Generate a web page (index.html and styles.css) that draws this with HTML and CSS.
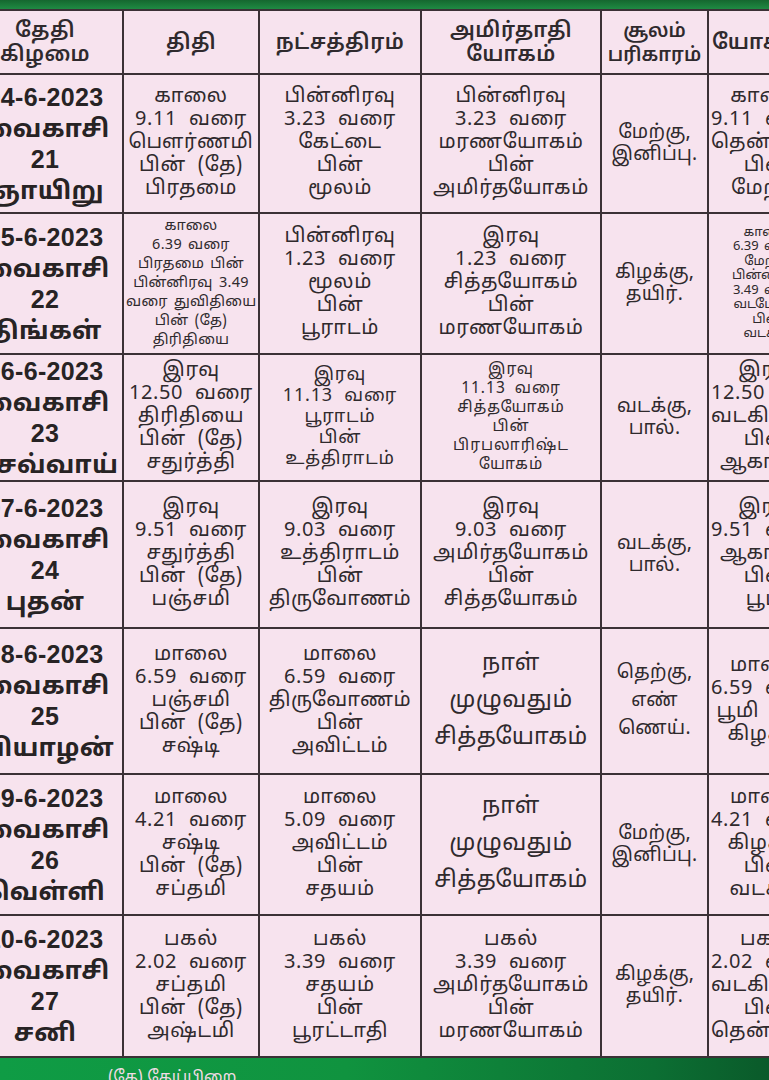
FILE: index.html
```html
<!DOCTYPE html>
<html lang="ta">
<head>
<meta charset="utf-8">
<title>பஞ்சாங்கம்</title>
<link rel="stylesheet" href="styles.css">
</head>
<body>
<div class="page">
  <div class="topbar"></div>
  <table class="cal">
    <colgroup>
      <col class="c1"><col class="c2"><col class="c3"><col class="c4"><col class="c5"><col class="c6">
    </colgroup>
    <thead>
      <tr class="head">
        <th>தேதி<br>கிழமை</th>
        <th>திதி</th>
        <th>நட்சத்திரம்</th>
        <th>அமிர்தாதி<br>யோகம்</th>
        <th class="hs">சூலம்<br>பரிகாரம்</th>
        <th>யோகினி</th>
      </tr>
    </thead>
    <tbody>
      <tr class="r1">
        <td class="date">04-6-2023<br>வைகாசி<br>21<br>ஞாயிறு</td>
        <td>காலை<br>9.11 வரை<br>பௌர்ணமி<br>பின் (தே)<br>பிரதமை</td>
        <td>பின்னிரவு<br>3.23 வரை<br>கேட்டை<br>பின்<br>மூலம்</td>
        <td>பின்னிரவு<br>3.23 வரை<br>மரணயோகம்<br>பின்<br>அமிர்தயோகம்</td>
        <td class="sul">மேற்கு,<br>இனிப்பு.</td>
        <td>காலை<br>9.11 வரை<br>தென்மேற்கு<br>பின்<br>மேற்கு</td>
      </tr>
      <tr class="r2">
        <td class="date">05-6-2023<br>வைகாசி<br>22<br>திங்கள்</td>
        <td class="small">காலை<br>6.39 வரை<br>பிரதமை பின்<br>பின்னிரவு 3.49<br>வரை துவிதியை<br>பின் (தே)<br>திரிதியை</td>
        <td>பின்னிரவு<br>1.23 வரை<br>மூலம்<br>பின்<br>பூராடம்</td>
        <td>இரவு<br>1.23 வரை<br>சித்தயோகம்<br>பின்<br>மரணயோகம்</td>
        <td class="sul">கிழக்கு,<br>தயிர்.</td>
        <td class="tiny">காலை<br>6.39 வரை<br>மேற்கு<br>பின்னிரவு<br>3.49 வரை<br>வடமேற்கு<br>பின்<br>வடக்கு</td>
      </tr>
      <tr class="r3">
        <td class="date">06-6-2023<br>வைகாசி<br>23<br>செவ்வாய்</td>
        <td>இரவு<br>12.50 வரை<br>திரிதியை<br>பின் (தே)<br>சதுர்த்தி</td>
        <td class="mid">இரவு<br>11.13 வரை<br>பூராடம்<br>பின்<br>உத்திராடம்</td>
        <td class="six">இரவு<br>11.13 வரை<br>சித்தயோகம்<br>பின்<br>பிரபலாரிஷ்ட<br>யோகம்</td>
        <td class="sul">வடக்கு,<br>பால்.</td>
        <td>இரவு<br>12.50 வரை<br>வடகிழக்கு<br>பின்<br>ஆகாயம்</td>
      </tr>
      <tr class="r4">
        <td class="date">07-6-2023<br>வைகாசி<br>24<br>புதன்</td>
        <td>இரவு<br>9.51 வரை<br>சதுர்த்தி<br>பின் (தே)<br>பஞ்சமி</td>
        <td>இரவு<br>9.03 வரை<br>உத்திராடம்<br>பின்<br>திருவோணம்</td>
        <td>இரவு<br>9.03 வரை<br>அமிர்தயோகம்<br>பின்<br>சித்தயோகம்</td>
        <td class="sul">வடக்கு,<br>பால்.</td>
        <td>இரவு<br>9.51 வரை<br>ஆகாயம்<br>பின்<br>பூமி</td>
      </tr>
      <tr class="r5">
        <td class="date">08-6-2023<br>வைகாசி<br>25<br>வியாழன்</td>
        <td>மாலை<br>6.59 வரை<br>பஞ்சமி<br>பின் (தே)<br>சஷ்டி</td>
        <td>மாலை<br>6.59 வரை<br>திருவோணம்<br>பின்<br>அவிட்டம்</td>
        <td class="big">நாள்<br>முழுவதும்<br>சித்தயோகம்</td>
        <td class="sul three">தெற்கு,<br>எண்<br>ணெய்.</td>
        <td>மாலை<br>6.59 வரை<br>பூமி பின்<br>கிழக்கு</td>
      </tr>
      <tr class="r6">
        <td class="date">09-6-2023<br>வைகாசி<br>26<br>வெள்ளி</td>
        <td>மாலை<br>4.21 வரை<br>சஷ்டி<br>பின் (தே)<br>சப்தமி</td>
        <td>மாலை<br>5.09 வரை<br>அவிட்டம்<br>பின்<br>சதயம்</td>
        <td class="big">நாள்<br>முழுவதும்<br>சித்தயோகம்</td>
        <td class="sul">மேற்கு,<br>இனிப்பு.</td>
        <td>மாலை<br>4.21 வரை<br>கிழக்கு<br>பின்<br>வடக்கு</td>
      </tr>
      <tr class="r7">
        <td class="date">10-6-2023<br>வைகாசி<br>27<br>சனி</td>
        <td>பகல்<br>2.02 வரை<br>சப்தமி<br>பின் (தே)<br>அஷ்டமி</td>
        <td>பகல்<br>3.39 வரை<br>சதயம்<br>பின்<br>பூரட்டாதி</td>
        <td>பகல்<br>3.39 வரை<br>அமிர்தயோகம்<br>பின்<br>மரணயோகம்</td>
        <td class="sul">கிழக்கு,<br>தயிர்.</td>
        <td>பகல்<br>2.02 வரை<br>வடகிழக்கு<br>பின்<br>தென்கிழக்கு</td>
      </tr>
    </tbody>
  </table>
  <div class="footbar"><span class="note">(தே) தேய்பிறை</span></div>
</div>
</body>
</html>
```
FILE: styles.css
```css
html, body {
  margin: 0;
  padding: 0;
  background: #f7e3ee;
}
body {
  width: 769px;
  height: 1080px;
  overflow: hidden;
  font-family: "Noto Sans Tamil", "Lohit Tamil", "Noto Sans", "Liberation Sans", sans-serif;
  color: #2f2a2d;
}
.page {
  width: 769px;
  height: 1080px;
  overflow: hidden;
  display: flex;
  flex-direction: column;
}
.topbar {
  height: 9px;
  flex: none;
  background: linear-gradient(#15672f, #1f8a43);
}
.cal {
  flex: none;
  margin-left: -34px;
  border-collapse: collapse;
  table-layout: fixed;
  width: 859px;
  background: #f7e3ee;
}
.c1 { width: 156px; }
.c2 { width: 136px; }
.c3 { width: 162px; }
.c4 { width: 180px; }
.c5 { width: 107px; }
.c6 { width: 118px; }
.cal th, .cal td {
  border: 2px solid #3b3136;
  text-align: center;
  vertical-align: middle;
  padding: 0 2px;
  overflow: hidden;
  white-space: nowrap;
}
.cal th {
  font-size: 21px;
  font-weight: 600;
  line-height: 24px;
  letter-spacing: 0.5px;
  padding-top: 3px;
}
.cal th.hs {
  font-size: 19px;
  letter-spacing: 0;
}
.cal td {
  font-size: 20px;
  line-height: 23px;
  letter-spacing: 0.6px;
  word-spacing: 6px;
}
.head { height: 64px; }
.r1 { height: 139px; }
.r2 { height: 141px; }
.r3 { height: 127px; }
.r4 { height: 147px; }
.r5 { height: 146px; }
.r6 { height: 141px; }
.r7 { height: 142px; }
.cal td.date {
  font-family: "Liberation Sans", "Noto Sans Tamil", sans-serif;
  font-weight: 700;
  font-size: 25px;
  line-height: 31px;
  letter-spacing: 0.3px;
  word-spacing: 0;
  color: #272324;
}
.cal td.small {
  font-size: 14.5px;
  line-height: 19px;
  letter-spacing: 0.3px;
  word-spacing: 2px;
}
.cal td.tiny {
  font-size: 13px;
  line-height: 14.5px;
  letter-spacing: 0;
  word-spacing: 2px;
}
.cal td.mid {
  font-size: 18px;
  line-height: 21px;
  letter-spacing: 0.8px;
}
.cal td.six {
  font-size: 15.5px;
  line-height: 19px;
  letter-spacing: 1px;
  word-spacing: 4px;
}
.cal td.big {
  font-size: 23px;
  line-height: 37px;
  letter-spacing: 0.5px;
}
.cal td.sul {
  font-size: 19px;
  line-height: 22px;
  letter-spacing: 0.3px;
  word-spacing: 0;
}
.cal td.three {
  line-height: 28px;
}
.footbar {
  flex: 1;
  background: linear-gradient(90deg, #0f9c45 0%, #10933f 45%, #0c6f33 85%, #0a5a2a 100%);
  padding-left: 108px;
}
.note {
  display: block;
  padding-top: 10px;
  font-size: 16px;
  line-height: 20px;
  color: #f2dce6;
}
```
